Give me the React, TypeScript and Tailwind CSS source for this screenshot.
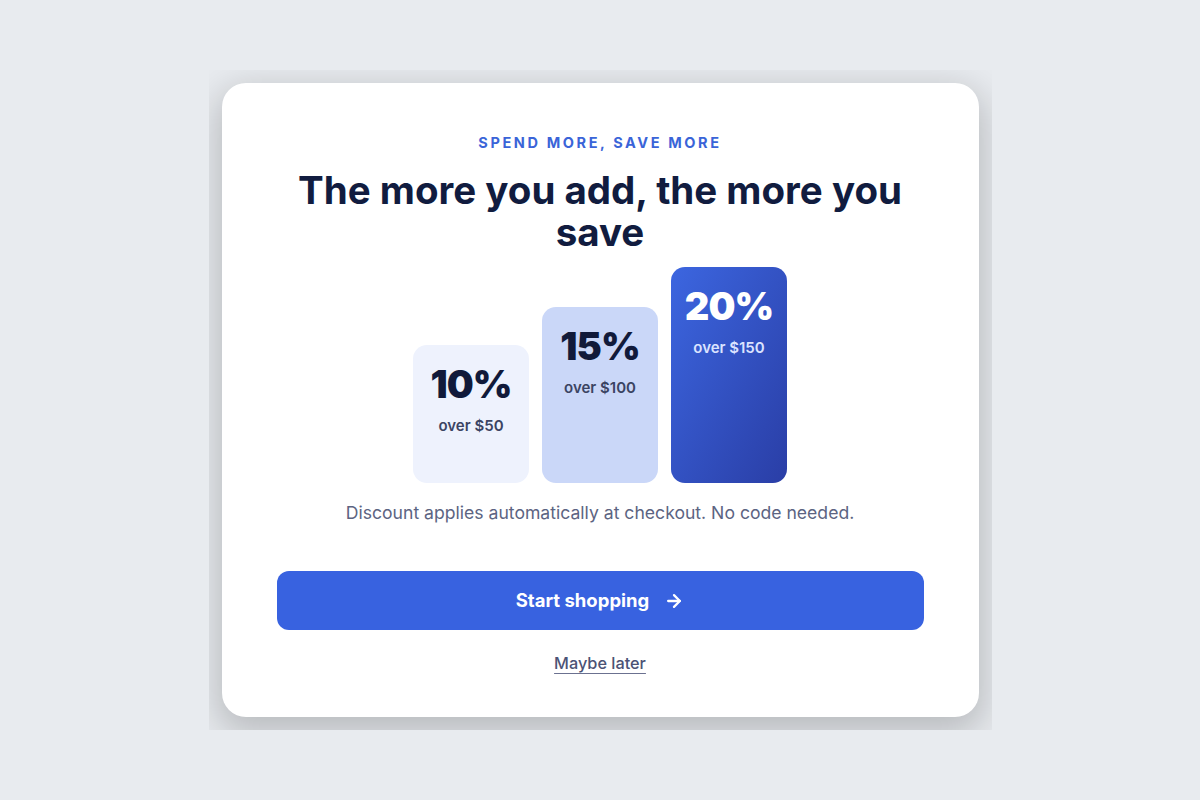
import React from "react";
import { ArrowRight } from "lucide-react";

interface TierProps {
  percent: string;
  threshold: string;
  height: string;
  tone: "light" | "mid" | "dark";
}

function Tier({ percent, threshold, height, tone }: TierProps) {
  const toneClass =
    tone === "light"
      ? "bg-[#eef2fd] text-[#111a3a]"
      : tone === "mid"
      ? "bg-[#cad7f8] text-[#111a3a]"
      : "bg-gradient-to-br from-[#3c66e0] to-[#2a3ea6] text-white";
  const subClass =
    tone === "dark" ? "text-[#dbe3ff]" : "text-[#3b4463]";
  return (
    <div
      className={`w-[116px] ${height} rounded-[14px] pt-5 flex flex-col items-center ${toneClass}`}
    >
      <div className="text-[38px] leading-none font-black tracking-tight">
        {percent}
      </div>
      <div className={`mt-3 text-[15px] leading-[22px] font-semibold ${subClass}`}>
        {threshold}
      </div>
    </div>
  );
}

export default function App() {
  return (
    <div
      className="min-h-screen w-full bg-[#e8ebef] flex items-center justify-center"
      style={{ fontFamily: "Inter, 'Noto Sans', sans-serif" }}
    >
      {/* Offer card */}
      <div className="overflow-hidden p-[13px]">
        <div className="w-[757px] bg-white rounded-[24px] shadow-[0_12px_36px_6px_rgba(0,0,0,0.2)] pt-[50px] pb-[42px] px-[55px] flex flex-col items-center text-center">
          <div className="text-[14.5px] leading-5 font-bold tracking-[0.18em] text-[#3a64d8]">
            SPEND MORE, SAVE MORE
          </div>
          <h1 className="mt-4 text-[38.5px] leading-[42px] font-bold text-[#111c3f]">
            The more you add, the more you save
          </h1>

          {/* Discount tiers */}
          <div className="mt-[14px] flex items-end gap-[13px]">
            <Tier percent="10%" threshold="over $50" height="h-[138px]" tone="light" />
            <Tier percent="15%" threshold="over $100" height="h-[176px]" tone="mid" />
            <Tier percent="20%" threshold="over $150" height="h-[216px]" tone="dark" />
          </div>

          <p className="mt-4 text-[17.6px] leading-7 text-[#5c6482]">
            Discount applies automatically at checkout. No code needed.
          </p>

          <button className="mt-[44px] w-full h-[59px] rounded-[12px] bg-[#3862e0] text-white text-[18.5px] font-bold flex items-center justify-center gap-[15px]">
            <span>Start shopping</span>
            <ArrowRight size={20} strokeWidth={2.75} />
          </button>

          <a className="mt-[21px] text-[16.3px] leading-6 font-medium text-[#4b5275] underline underline-offset-4 decoration-[#6b7190]">
            Maybe later
          </a>
        </div>
      </div>
    </div>
  );
}
